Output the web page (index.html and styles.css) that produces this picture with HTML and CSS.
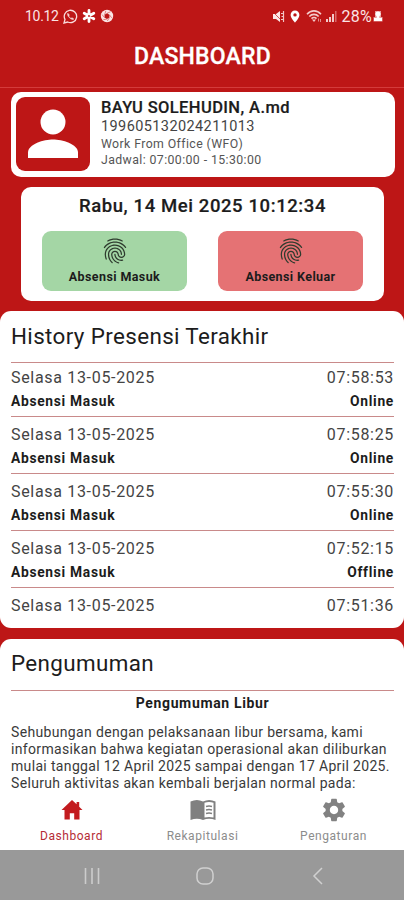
FILE: index.html
```html
<!DOCTYPE html>
<html lang="id">
<head>
<meta charset="utf-8">
<title>Dashboard</title>
<link rel="stylesheet" href="styles.css">
</head>
<body>
<svg class="defs" aria-hidden="true">
  <symbol id="finger" viewBox="0 0 24 24"><path d="M17.81 4.47c-.08 0-.16-.02-.23-.06C15.66 3.42 14 3 12.01 3c-1.98 0-3.86.47-5.57 1.41-.24.13-.54.04-.68-.2-.13-.24-.04-.55.2-.68C7.82 2.52 9.86 2 12.01 2c2.13 0 3.99.47 6.03 1.52.25.13.34.43.21.67-.09.18-.26.28-.44.28zM3.5 9.72c-.1 0-.2-.03-.29-.09-.23-.16-.28-.47-.12-.7.99-1.4 2.25-2.5 3.75-3.27C9.98 4.04 14 4.03 17.15 5.65c1.5.77 2.76 1.86 3.75 3.25.16.22.11.54-.12.7-.23.16-.54.11-.7-.12-.9-1.26-2.04-2.25-3.39-2.94-2.87-1.47-6.54-1.47-9.4.01-1.36.7-2.5 1.7-3.4 2.96-.08.14-.23.21-.39.21zm6.25 12.07c-.13 0-.26-.05-.35-.15-.87-.87-1.34-1.43-2.01-2.64-.69-1.23-1.05-2.73-1.05-4.34 0-2.97 2.54-5.39 5.66-5.39s5.66 2.42 5.66 5.39c0 .28-.22.5-.5.5s-.5-.22-.5-.5c0-2.42-2.09-4.39-4.66-4.39-2.57 0-4.66 1.97-4.66 4.39 0 1.44.32 2.77.93 3.85.64 1.15 1.08 1.64 1.85 2.42.19.2.19.51 0 .71-.11.1-.24.15-.37.15zm7.17-1.85c-1.19 0-2.24-.3-3.1-.89-1.49-1.01-2.38-2.65-2.38-4.39 0-.28.22-.5.5-.5s.5.22.5.5c0 1.41.72 2.74 1.94 3.56.71.48 1.54.71 2.54.71.24 0 .64-.03 1.04-.1.27-.05.53.13.58.41.05.27-.13.53-.41.58-.57.11-1.07.12-1.21.12zM14.91 22c-.04 0-.09-.01-.13-.02-1.59-.44-2.63-1.03-3.72-2.1-1.4-1.39-2.17-3.24-2.17-5.22 0-1.62 1.38-2.94 3.08-2.94 1.7 0 3.08 1.32 3.08 2.94 0 1.07.93 1.94 2.08 1.94s2.08-.87 2.08-1.94c0-3.77-3.25-6.83-7.25-6.83-2.84 0-5.44 1.58-6.61 4.03-.39.81-.59 1.76-.59 2.8 0 .78.07 2.01.67 3.61.1.26-.03.55-.29.64-.26.1-.55-.04-.64-.29-.49-1.31-.73-2.61-.73-3.96 0-1.2.23-2.29.68-3.24 1.33-2.79 4.28-4.6 7.51-4.6 4.55 0 8.25 3.51 8.25 7.83 0 1.62-1.38 2.94-3.08 2.94s-3.08-1.32-3.08-2.94c0-1.07-.93-1.94-2.08-1.94s-2.08.87-2.08 1.94c0 1.71.66 3.31 1.87 4.51.95.94 1.86 1.46 3.27 1.85.27.07.42.35.35.61-.05.23-.26.38-.47.38z"/></symbol>
</svg>
<div class="screen">
  <div class="status">
    <div class="status-left">
      <span class="time">10.12</span>
      <svg width="15" height="15" viewBox="0 0 15 15" fill="none" stroke="#f9dcdc" stroke-width="1.3"><path d="M1 14l1-3.6A6.2 6.2 0 1 1 4.700 13z"/><path d="M4.800 4.200c-.8 1 0 3 1.700 4.600s3.500 2.300 4.300 1.200L9 8.700l-1 .7C7 9 6 8 5.700 7l.7-1z" fill="#f9dcdc" stroke-width=".5"/></svg>
      <svg width="14" height="14" viewBox="0 0 14 14" stroke="#fff" stroke-width="2.800" stroke-linecap="round"><path d="M7 1.500v11M2.200 4.200l9.600 5.600M11.800 4.200L2.200 9.800"/><circle cx="7" cy="7" r=".9" fill="#bd1616" stroke="none"/></svg>
      <svg width="14" height="14" viewBox="0 0 14 14"><circle cx="7" cy="7" r="6.200" fill="#fbe4e4"/><path d="M7 4.300l2.400 1.500v2.800L7 10 4.600 8.600V5.800z" fill="#bd1616"/><path d="M7 4.300l3.500-1.500M9.400 5.800l2.300 3M9.400 8.600L7.300 12M7 10l-3.600.7M4.600 8.600L2 5.500M4.600 5.800L5.800 2" stroke="#bd1616" stroke-width=".5"/></svg>
    </div>
    <div class="status-right">
      <svg class="mute" width="13" height="13" viewBox="0 0 13 13" fill="#fce8e8"><path d="M1 4h3l4-3v11L4 9H1z"/><path d="M9 3.500h2M9.500 6.500h2M9 9.500h2M11.500 1v11" stroke="#f3c6c6" stroke-width="1.200"/><path d="M1 2l10 10" stroke="#bd1616" stroke-width=".7"/></svg>
      <svg class="pin" width="10" height="13" viewBox="0 0 10 13"><path d="M5 .5a4.400 4.400 0 0 0-4.400 4.400C.6 8 5 12.500 5 12.500S9.400 8 9.400 4.900A4.400 4.400 0 0 0 5 .5z" fill="#fff"/><circle cx="5" cy="4.900" r="1.700" fill="#bd1616"/></svg>
      <svg class="wifi" width="16" height="13" viewBox="0 0 16 13" fill="none" stroke="#f3c9c9" stroke-width="1.600"><path d="M1 4.200C5-.2 11-.2 15 4.200M3.300 6.500c2.600-2.900 6.800-2.900 9.400 0M5.500 8.600c1.400-1.500 3.600-1.500 5 0"/><path d="M8 12l-2-2.400h4z" fill="#f3c9c9" stroke="none"/><path d="M12.500 8.500v3M14.500 9v3" stroke="#e08c8c" stroke-width="1"/></svg>
      <svg class="signal" width="11" height="12" viewBox="0 0 11 12"><path d="M0 9h2v3H0zM3 7h2v5H3zM6 4h2v8H6z" fill="#f3c9c9"/><path d="M9 1h1.500v11H9z" fill="#d96868"/></svg>
      <span class="battery">28%</span>
      <svg class="charge" width="10" height="12" viewBox="0 0 10 12"><path d="M2 1h6v6h1.500v4.500H.5V7H2z" fill="#e99a9a"/><path d="M5 1.500a2.500 2.500 0 0 1 1.300 4.700V8H9v3H1V8h2.700V6.200A2.500 2.500 0 0 1 5 1.500z" fill="#fff"/></svg>
    </div>
  </div>
  <header class="title">DASHBOARD</header>

  <section class="profile">
    <svg class="avatar" viewBox="0 0 74 74"><circle cx="37" cy="25" r="12.500" fill="#fff"/><path d="M12 61v-5.500C12 47 28 42.500 37 42.500S62 47 62 55.500V61z" fill="#fff"/></svg>
    <div class="who">
      <div class="name">BAYU SOLEHUDIN, A.md</div>
      <div class="nip">199605132024211013</div>
      <div class="meta">Work From Office (WFO)</div>
      <div class="meta">Jadwal: 07:00:00 - 15:30:00</div>
    </div>
  </section>

  <section class="clock">
    <div class="now">Rabu, 14 Mei 2025 10:12:34</div>
    <div class="buttons">
      <div class="btn in"><svg width="30" height="30"><use href="#finger"/></svg><span>Absensi Masuk</span></div>
      <div class="btn out"><svg width="30" height="30"><use href="#finger"/></svg><span>Absensi Keluar</span></div>
    </div>
  </section>

  <section class="card history">
    <h2>History Presensi Terakhir</h2>
    <div class="row first"><div class="line"><span>Selasa 13-05-2025</span><span>07:58:53</span></div><div class="sub"><span>Absensi Masuk</span><span>Online</span></div></div>
    <div class="row"><div class="line"><span>Selasa 13-05-2025</span><span>07:58:25</span></div><div class="sub"><span>Absensi Masuk</span><span>Online</span></div></div>
    <div class="row"><div class="line"><span>Selasa 13-05-2025</span><span>07:55:30</span></div><div class="sub"><span>Absensi Masuk</span><span>Online</span></div></div>
    <div class="row"><div class="line"><span>Selasa 13-05-2025</span><span>07:52:15</span></div><div class="sub"><span>Absensi Masuk</span><span>Offline</span></div></div>
    <div class="row"><div class="line"><span>Selasa 13-05-2025</span><span>07:51:36</span></div></div>
  </section>

  <section class="card news">
    <h2>Pengumuman</h2>
    <div class="news-body">
      <div class="news-title">Pengumuman Libur</div>
      <p>Sehubungan dengan pelaksanaan libur bersama, kami<br>informasikan bahwa kegiatan operasional akan diliburkan<br>mulai tanggal 12 April 2025 sampai dengan 17 April 2025.<br>Seluruh aktivitas akan kembali berjalan normal pada:</p>
    </div>
  </section>

  <nav class="tabs">
    <div class="tab active"><svg width="28" height="28" viewBox="0 0 28 28"><path d="M14 4L3.500 14h3v9.500h5.300v-6.200h4.400v6.200h5.300V14h3l-3.300-3.200V6h-2.600v2.300z" fill="#c31b1f"/></svg><span>Dashboard</span></div>
    <div class="tab"><svg width="28" height="28" viewBox="0 0 28 28"><path d="M1.500 5.500Q8 2.500 14 5.500 20 2.500 26.500 5.500V24Q20 21.500 14 24 8 21.500 1.500 24z" fill="#808080"/><path d="M15.500 6.800q4.600-1.800 9 0v14.800q-4.400-1.400-9 0z" fill="#fff"/><path d="M17 10.500q3-1 6 0M17 14q3-1 6 0M17 17.500q3-1 6 0" fill="none" stroke="#808080" stroke-width="1.500"/></svg><span>Rekapitulasi</span></div>
    <div class="tab"><svg width="28" height="28" viewBox="0 0 24 24"><path fill="#828282" d="M19.14 12.94c.04-.3.06-.61.06-.94 0-.32-.02-.64-.07-.94l2.030-1.580c.18-.14.23-.41.12-.61l-1.920-3.320c-.12-.22-.37-.29-.59-.22l-2.390.96c-.5-.38-1.030-.7-1.620-.94l-.36-2.540c-.04-.24-.24-.41-.48-.41h-3.840c-.24 0-.43.17-.47.41l-.36 2.540c-.59.24-1.130.57-1.620.94l-2.390-.96c-.22-.08-.47 0-.59.22L2.740 8.870c-.12.21-.08.47.12.61l2.030 1.580c-.05.3-.09.63-.09.94s.02.64.07.94l-2.030 1.580c-.18.14-.23.41-.12.61l1.920 3.320c.12.22.37.29.59.22l2.390-.96c.5.38 1.030.7 1.620.94l.36 2.540c.05.24.24.41.48.41h3.840c.24 0 .44-.17.47-.41l.36-2.540c.59-.24 1.130-.56 1.620-.94l2.390.96c.22.08.47 0 .59-.22l1.920-3.320c.12-.22.07-.47-.12-.61l-2.010-1.580zM12 15.600c-1.980 0-3.600-1.620-3.600-3.600s1.620-3.600 3.600-3.600 3.600 1.620 3.600 3.600-1.620 3.600-3.600 3.600z"/></svg><span>Pengaturan</span></div>
  </nav>
  <div class="sysbar">
    <svg width="18" height="18" viewBox="0 0 18 18" stroke="#ccc" stroke-width="1.600"><path d="M2.500 1v16M9 1v16M15.500 1v16"/></svg>
    <svg width="18" height="18" viewBox="0 0 18 18" fill="none" stroke="#d0d0d0" stroke-width="1.500"><rect x="1" y="1" width="16" height="16" rx="6"/></svg>
    <svg width="18" height="18" viewBox="0 0 18 18" fill="none" stroke="#d0d0d0" stroke-width="1.500"><path d="M13 1L5 9l8 8"/></svg>
  </div>
</div>
</body>
</html>
```
FILE: styles.css
```css
* { box-sizing: border-box; }
body { margin: 0; font-family: Roboto, sans-serif; color: #1c1c1c; }
.defs { display: none; }
.screen { width: 404px; height: 900px; background: #bd1616; display: flex; flex-direction: column; overflow: hidden; }
.status { height: 32px; padding: 0 21px 0 25px; display: flex; justify-content: space-between; align-items: center; color: #fbe4e4; font-size: 14px; flex: none; }
.status-left, .status-right { display: flex; align-items: center; }
.status-left { gap: 4px; }
.time { letter-spacing: -.3px; }
.pin { margin-left: 5px; }
.wifi { margin-left: 6px; }
.signal { margin-left: 4px; }
.battery { margin-left: 4px; font-size: 16px; letter-spacing: .3px; }
.charge { margin-left: 1px; }
.title { height: 56px; flex: none; border-bottom: 1px solid #d43b3b; color: #fff; font-weight: 500; font-size: 23px; line-height: 49px; padding-left: 1px; text-align: center; letter-spacing: .2px; -webkit-text-stroke: .3px #fff; }

.profile { flex: none; margin: 4px 9px 0 11px; height: 85px; background: #fff; border-radius: 10px; padding: 5px; display: flex; gap: 11px; }
.who { padding-top: 1px; }
.avatar { width: 74px; height: 74px; background: #bd1616; border-radius: 9px; }
.name { font-size: 16.500px; font-weight: 500; line-height: 20px; letter-spacing: .4px; -webkit-text-stroke: .2px #1c1c1c; }
.nip { font-size: 14.500px; line-height: 18px; color: #444; letter-spacing: .4px; }
.meta { font-size: 12.300px; line-height: 16px; color: #555; letter-spacing: .4px; }

.clock { flex: none; margin: 10px 20px 0 21px; height: 114px; background: #fff; border-radius: 10px; padding: 7px 21px 0; }
.now { text-align: center; font-size: 18.500px; font-weight: 500; line-height: 25px; letter-spacing: .6px; -webkit-text-stroke: .2px #1c1c1c; }
.buttons { display: flex; justify-content: space-between; margin-top: 12px; }
.btn { width: 145px; height: 60px; border-radius: 9px; display: flex; flex-direction: column; align-items: center; padding-top: 5px; font-size: 12.500px; font-weight: 700; line-height: 16px; letter-spacing: .4px; }
.btn svg { fill: #2e3b2e; }
.btn span { margin-top: 3px; }
.in { background: #a4d6a5; }
.out { background: #e57274; }

.card { background: #fff; padding: 0 10px 0 11px; }
.card h2 { margin: 0; font-weight: 400; font-size: 22.400px; letter-spacing: .37px; }
.history { flex: none; height: 317px; margin-top: 10px; border-radius: 11px; overflow: hidden; }
.history h2 { height: 51px; line-height: 51px; }
.row { border-top: 1.500px solid #c98a8a; height: 57px; padding-top: 8px; }
.row.first { height: 54px; padding-top: 5px; }
.line, .sub { display: flex; justify-content: space-between; }
.line { font-size: 16px; line-height: 20px; color: #444; letter-spacing: .68px; }
.sub { font-size: 13.800px; font-weight: 700; line-height: 16px; margin-top: 5px; letter-spacing: .7px; }

.news { flex: 1; min-height: 0; margin-top: 11px; border-radius: 11px 11px 0 0; overflow: hidden; }
.news h2 { height: 51px; line-height: 49px; }
.news-body { border-top: 1.500px solid #c98a8a; }
.news-title { text-align: center; font-size: 14px; font-weight: 700; line-height: 24px; letter-spacing: .65px; }
.news p { margin: 9px 0 0; font-size: 14px; line-height: 17px; color: #3a3a3a; letter-spacing: .34px; white-space: nowrap; }

.tabs { flex: none; height: 56px; background: #fff; display: grid; grid-template-columns: 143px 119px 143px; }
.tab { display: flex; flex-direction: column; align-items: center; padding-top: 2px; font-size: 12px; line-height: 16px; color: #8c8c8c; letter-spacing: .55px; }
.tab span { margin-top: 4px; }
.active { color: #b52b35; }
.sysbar { flex: none; height: 50px; padding: 2px 77px 0 83px; background: #999; display: flex; justify-content: space-between; align-items: center; }
```
